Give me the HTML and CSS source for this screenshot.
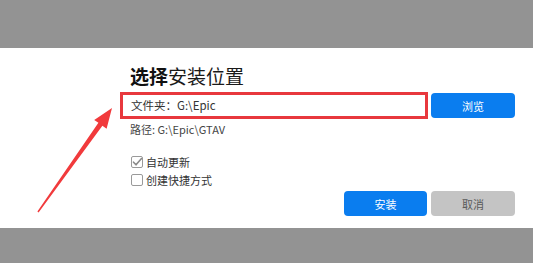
FILE: index.html
```html
<!DOCTYPE html>
<html lang="zh">
<head>
<meta charset="utf-8">
<title>选择安装位置</title>
<link rel="stylesheet" href="styles.css">
</head>
<body>
<div class="band band-top"></div>
<main class="dialog">
  <div class="panel">
    <h1 class="title"><b>选择</b>安装位置</h1>
    <div class="row">
      <div class="field">文件夹：G:\Epic</div>
      <button class="btn btn-primary">浏览</button>
    </div>
    <div class="path">路径: G:\Epic\GTAV</div>
    <div class="checks">
      <label class="check"><span class="box"><svg viewBox="0 0 12 12" width="12" height="12"><path d="M2.5 6.2 L5 8.8 L10.5 2.5" fill="none" stroke="#8a8a8a" stroke-width="1.6" stroke-linecap="round" stroke-linejoin="round"/></svg></span>自动更新</label>
      <label class="check"><span class="box"></span>创建快捷方式</label>
    </div>
    <div class="actions">
      <button class="btn btn-primary btn-install">安装</button>
      <button class="btn btn-cancel">取消</button>
    </div>
  </div>
  <svg class="arrow" viewBox="0 0 533 180" width="533" height="180">
    <polygon points="37.4,163.6 98.4,74.85 94.2,71.9 112,60 106.6,80.8 102.4,77.75 38.6,164.4" fill="#f13a3c"/>
  </svg>
</main>
<div class="band band-bottom"></div>
</body>
</html>
```
FILE: styles.css
```css
html, body {
  margin: 0;
  padding: 0;
  background: #ffffff;
}
body {
  font-family: "Noto Sans CJK SC", "Noto Sans", sans-serif;
  color: #333;
  width: 533px;
  height: 263px;
  overflow: hidden;
}
.band {
  background: #939393;
}
.band-top {
  height: 48px;
}
.band-bottom {
  height: 35px;
}
.dialog {
  position: relative;
  height: 180px;
  box-sizing: border-box;
  padding-top: 16px;
  background: #fff;
}
.panel {
  margin-left: 120px;
  width: 395px;
  display: flex;
  flex-direction: column;
}
.title {
  margin: 0 0 5px 10px;
  font-size: 19px;
  line-height: 23px;
  font-weight: 400;
  color: #1a1a1a;
}
.title b {
  font-weight: 700;
  color: #111;
}
.row {
  display: grid;
  grid-template-columns: 1fr 84px;
  column-gap: 3px;
  align-items: center;
}
.field {
  height: 27px;
  box-sizing: border-box;
  border: 3px solid #e8383d;
  padding-left: 8px;
  font-size: 11.5px;
  line-height: 21px;
  color: #333;
}
.btn {
  height: 25px;
  border: none;
  border-radius: 4px;
  font-family: "Noto Sans CJK SC", "Noto Sans", sans-serif;
  font-size: 11px;
  padding: 0;
  color: #fff;
  cursor: pointer;
}
.btn-primary {
  background: #0a7def;
}
.btn-cancel {
  background: #c4c4c4;
  color: #5a5a5a;
  width: 84px;
}
.btn-install {
  width: 83px;
}
.path {
  margin: 3px 0 0 10px;
  font-size: 11px;
  line-height: 15px;
  color: #444;
}
.checks {
  margin: 17px 0 0 11px;
  display: flex;
  flex-direction: column;
  gap: 2px;
}
.check {
  display: flex;
  align-items: center;
  gap: 3px;
  height: 16px;
  font-size: 11px;
  color: #333;
}
.box {
  width: 12px;
  height: 12px;
  border: 1px solid #9a9a9a;
  border-radius: 2px;
  box-sizing: border-box;
  display: inline-flex;
  align-items: center;
  justify-content: center;
  overflow: visible;
}
.box svg {
  flex: none;
}
.actions {
  margin-top: 3px;
  display: flex;
  justify-content: flex-end;
  gap: 4px;
}
.arrow {
  position: absolute;
  left: 0;
  top: 0;
  pointer-events: none;
}
```
